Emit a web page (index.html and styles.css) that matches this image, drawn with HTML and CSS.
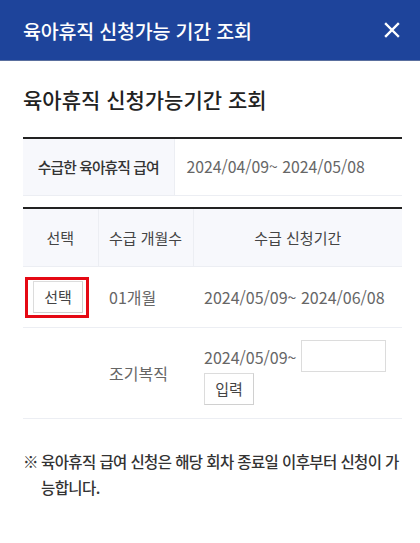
FILE: index.html
```html
<!DOCTYPE html>
<html lang="ko">
<head>
<meta charset="utf-8">
<link rel="stylesheet" href="styles.css">
</head>
<body>
<header class="topbar">
  <h1 class="topbar-title">육아휴직 신청가능 기간 조회</h1>
  <button class="close" aria-label="닫기">
    <svg width="16" height="16" viewBox="0 0 16 16"><path d="M2 2L14 14M14 2L2 14" stroke="#fff" stroke-width="2.4" stroke-linecap="square"/></svg>
  </button>
</header>
<main class="content">
  <h2 class="page-title">육아휴직 신청가능기간 조회</h2>
  <table class="info">
    <tr>
      <th>수급한 육아휴직 급여</th>
      <td>2024/04/09~ 2024/05/08</td>
    </tr>
  </table>
  <table class="list">
    <colgroup><col class="c1"><col class="c2"><col class="c3"></colgroup>
    <thead>
      <tr><th>선택</th><th>수급 개월수</th><th>수급 신청기간</th></tr>
    </thead>
    <tbody>
      <tr class="r1">
        <td class="sel"><span class="hl"><button class="btn">선택</button></span></td>
        <td>01개월</td>
        <td>2024/05/09~ 2024/06/08</td>
      </tr>
      <tr class="r2">
        <td></td>
        <td>조기복직</td>
        <td>
          <div class="early">
            <span>2024/05/09~</span><input class="date-input" type="text">
          </div>
          <button class="btn">입력</button>
        </td>
      </tr>
    </tbody>
  </table>
  <p class="note"><span class="mark">※</span><span class="note-text">육아휴직 급여 신청은 해당 회차 종료일 이후부터 신청이 가능합니다.</span></p>
</main>
</body>
</html>
```
FILE: styles.css
```css
* { box-sizing: border-box; }
html, body { margin: 0; padding: 0; background: #fff; }
body {
  font-family: "Noto Sans CJK KR", "Noto Sans", sans-serif;
  color: #333;
}
.topbar {
  height: 61px;
  background: #1e449b;
  border-bottom: 1px solid #5a6f9e;
  display: flex;
  align-items: center;
  justify-content: space-between;
  padding: 0 16px 0 23px;
}
.topbar-title {
  margin: 0;
  font-size: 19.5px;
  font-weight: 500;
  color: #fff;
  letter-spacing: -0.2px;
}
.close {
  background: none;
  border: 0;
  padding: 0;
  width: 24px;
  height: 24px;
  display: flex;
  align-items: center;
  justify-content: center;
}
.content { padding: 0 18px 0 23px; }
.page-title {
  margin: 22px 0 22px;
  font-size: 21px;
  font-weight: 500;
  color: #222;
  line-height: 32px;
}
table { width: 100%; border-collapse: collapse; }
.info { border-top: 2px solid #222; margin-bottom: 11px; }
.info th {
  width: 151px;
  height: 57px;
  background: #f7f8fc;
  font-size: 14.8px;
  font-weight: 500;
  color: #333;
  letter-spacing: -0.9px;
  border-right: 1px solid #eceef3;
  border-bottom: 1px solid #eceef3;
}
.info td {
  padding-left: 12px;
  font-size: 15.8px;
  color: #666;
  border-bottom: 1px solid #eceef3;
}
.list { border-top: 2px solid #222; }
.list .c1 { width: 75px; }
.list .c2 { width: 95px; }
.list th {
  height: 59px;
  background: #f7f8fc;
  font-size: 15px;
  font-weight: 400;
  color: #444;
  border-right: 1px solid #eceef3;
  border-bottom: 1px solid #eceef3;
}
.list th:last-child { border-right: 0; }
.list td {
  font-size: 16px;
  color: #666;
  border-bottom: 1px solid #eceef3;
  padding-left: 11px;
}
.list .r1 td { height: 61px; }
.list .r2 td { height: 91px; }
.list td.sel { padding-left: 2px; }
.hl {
  display: inline-flex;
  border: 3px solid #e50914;
  padding: 1px 3px 2px 5px;
}
.btn {
  font-family: inherit;
  font-size: 15px;
  color: #444;
  background: #fff;
  border: 1px solid #dcdcdc;
  border-right-color: #d0d0d0;
  border-bottom-color: #d0d0d0;
  height: 32px;
  width: 50px;
  padding: 0;
}
.early { display: flex; align-items: center; gap: 4px; margin-bottom: 1px; }
.date-input {
  width: 85px;
  height: 32px;
  border: 1px solid #dcdcdc;
  margin-top: -2px;
}
.note {
  margin: 29px 0 0;
  display: flex;
  gap: 3px;
  font-size: 15.5px;
  font-weight: 500;
  line-height: 26px;
  color: #333;
}
.note-text { word-break: break-all; letter-spacing: -0.6px; }
.mark { flex: none; width: 15px; }
```
